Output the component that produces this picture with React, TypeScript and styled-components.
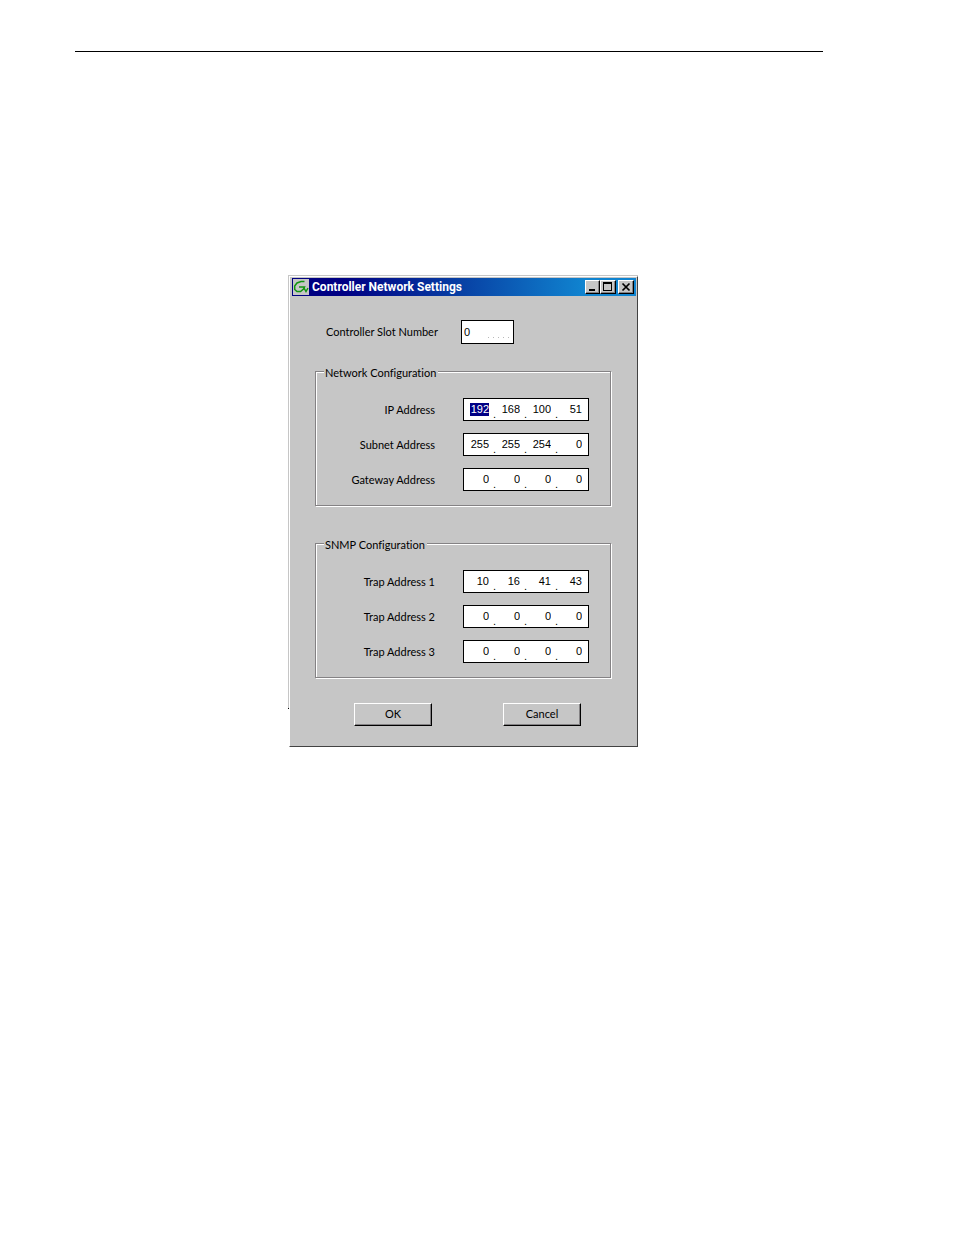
import React from 'react';
import styled, { createGlobalStyle, css } from 'styled-components';

const face = '#c6c6c6';
const digits = css`
  font-family: "Liberation Sans", Arial, sans-serif;
  font-size: 11px;
`;

const GlobalStyle = createGlobalStyle`
  *, *::before, *::after { box-sizing: border-box; }
  body {
    margin: 0;
    background: #fff;
    color: #000;
    font-family: Lato, "Liberation Sans", Arial, sans-serif;
    font-size: 11px;
    font-variant-ligatures: none;
    line-height: 16px;
  }
`;

const Page = styled.main`
  padding: 51px 131px 64px 75px;
`;

const Rule = styled.hr`
  height: 1px;
  margin: 0 0 223px;
  border: 0;
  background: #000;
`;

const Frame = styled.div`
  width: 350px;
  max-width: 100%;
  margin: 0 auto;
  position: relative;
  left: 14px;
  padding: 1px 0 0 1px;
  background:
    linear-gradient(#000, #000) 0 433px / 1px 1px no-repeat,
    linear-gradient(${face}, ${face}) 0 0 / 1px 433px no-repeat,
    linear-gradient(${face}, ${face}) 0 0 / 100% 1px no-repeat;
`;

const Dialog = styled.section`
  border: 1px solid #fff;
  border-right-color: #424242;
  border-bottom-color: #424242;
  background: ${face};
`;

const TitleBar = styled.header`
  display: flex;
  align-items: center;
  height: 18px;
  margin: 1px 1px 0 2px;
  padding: 0 2px 0 1px;
  background: linear-gradient(90deg, #000080, #000084 15%, #0842a5 50%, #1084d0 85%, #1084d0);
`;

const AppIcon = styled.svg`
  flex: none;
  width: 16px;
  height: 16px;
  margin-right: 3px;
`;

const Title = styled.h1`
  flex: 1;
  margin: 0;
  color: #fff;
  font-family: Roboto, "Liberation Sans", Arial, sans-serif;
  font-size: 12px;
  font-weight: bold;
  line-height: 16px;
  white-space: nowrap;
`;

const raised = css`
  border: 1px solid;
  border-color: #fff #000 #000 #fff;
  background: ${face};
  box-shadow: inset -1px -1px 0 #848284;
  color: #000;
`;

const WindowButton = styled.button<{ $apart?: boolean }>`
  ${raised}
  display: block;
  width: ${p => (p.$apart === undefined ? 15 : 16)}px;
  height: 14px;
  margin-left: ${p => (p.$apart ? 2 : 0)}px;
  padding: 0;
  svg { display: block; }
`;

const Form = styled.form`
  padding: 24px 25px 20px;
`;

const SlotRow = styled.div`
  display: flex;
  align-items: center;
  margin-bottom: 18px;
  padding-left: 11px;
`;

const SlotLabel = styled.label`
  width: 135px;
  white-space: nowrap;
`;

const SlotInput = styled.input`
  width: 53px;
  height: 24px;
  padding: 0 2px;
  border: 1px solid #000;
  border-radius: 0;
  outline: 0;
  background: repeating-linear-gradient(90deg, #b8b8b8 0 1px, #fff 1px 5px) 26px 16px / 21px 1px no-repeat #fff;
  ${digits}
`;

const Group = styled.fieldset`
  min-width: 0;
  margin: 0 1px 0 0;
  padding: 18px 0 14px 1px;
  border: 1px solid #848284;
  box-shadow: inset 1px 1px 0 #fff, 1px 1px 0 #fff;
  & + & { margin-top: 28px; }
`;

const Legend = styled.legend`
  margin-left: 7px;
  padding: 4px 2px 0 1px;
  background: ${face};
  line-height: 14px;
`;

const Rows = styled.div`
  display: grid;
  gap: 12px;
`;

const Row = styled.div`
  display: grid;
  grid-template-columns: 118px 126px;
  column-gap: 28px;
  align-items: center;
`;

const RowLabel = styled.label`
  text-align: right;
  white-space: nowrap;
`;

const AddressBox = styled.div`
  display: grid;
  grid-template-columns: repeat(4, 1fr);
  height: 23px;
  border: 1px solid #000;
  background: #fff;
`;

const Cell = styled.div`
  display: flex;
  align-items: center;
  justify-content: flex-end;
  min-width: 0;
`;

const Octet = styled.input<{ $selected: boolean }>`
  width: 19px;
  height: 13px;
  padding: 0;
  border: 0;
  border-radius: 0;
  outline: 0;
  background: ${p => (p.$selected ? '#000084' : 'transparent')};
  color: ${p => (p.$selected ? '#fff' : '#000')};
  ${digits}
  line-height: 13px;
  text-align: right;
`;

const Dot = styled.span`
  align-self: flex-end;
  width: 6px;
  padding-left: 4px;
  ${digits}
  line-height: 12px;
`;

const Actions = styled.div`
  display: flex;
  gap: 71px;
  margin-top: 25px;
  padding-left: 39px;
`;

const PushButton = styled.button`
  ${raised}
  width: 78px;
  height: 23px;
  padding: 0 0 2px;
  font: inherit;
`;

type AddressProps = { id: string; label: string; octets: string[]; selected?: number };

const AddressRow = ({ id, label, octets, selected }: AddressProps) => (
  <Row>
    <RowLabel htmlFor={`${id}-0`}>{label}</RowLabel>
    <AddressBox role="group" aria-label={label}>
      {octets.map((value, i) => (
        <Cell key={i}>
          <Octet
            id={`${id}-${i}`}
            aria-label={`${label}, part ${i + 1}`}
            defaultValue={value}
            maxLength={3}
            $selected={selected === i}
          />
          <Dot>{i < 3 ? '.' : ''}</Dot>
        </Cell>
      ))}
    </AddressBox>
  </Row>
);

export default function App() {
  return (
    <>
      <GlobalStyle />
      <Page>
        <Rule />
        <Frame>
          <Dialog>
            <TitleBar>
              <AppIcon viewBox="0 0 16 16" aria-hidden="true">
                <rect width="16" height="16" fill={face} />
                <path
                  d="M11.5 2.5H8L4 4L1.7 7V10.5L4 12.5H7.5L10.5 10L11.5 8H6M11 9L13 12.5L15 9"
                  fill="none"
                  stroke="#109410"
                  strokeWidth="1.5"
                />
              </AppIcon>
              <Title>Controller Network Settings</Title>
              <WindowButton type="button" aria-label="Minimize">
                <svg width="13" height="12" aria-hidden="true">
                  <path d="M3 8h6v2H3z" />
                </svg>
              </WindowButton>
              <WindowButton type="button" aria-label="Maximize" $apart={false}>
                <svg width="14" height="12" aria-hidden="true">
                  <path d="M2 1h9v9H2zM3 3v6h7V3z" fillRule="evenodd" />
                </svg>
              </WindowButton>
              <WindowButton type="button" aria-label="Close" $apart>
                <svg width="14" height="12" aria-hidden="true">
                  <path d="M3.5 2.5l7 7M10.5 2.5l-7 7" stroke="#000" strokeWidth="1.7" />
                </svg>
              </WindowButton>
            </TitleBar>
            <Form onSubmit={e => e.preventDefault()}>
              <SlotRow>
                <SlotLabel htmlFor="slot">Controller Slot Number</SlotLabel>
                <SlotInput id="slot" defaultValue="0" />
              </SlotRow>
              <Group>
                <Legend>Network Configuration</Legend>
                <Rows>
                  <AddressRow id="ip" label="IP Address" octets={['192', '168', '100', '51']} selected={0} />
                  <AddressRow id="subnet" label="Subnet Address" octets={['255', '255', '254', '0']} />
                  <AddressRow id="gateway" label="Gateway Address" octets={['0', '0', '0', '0']} />
                </Rows>
              </Group>
              <Group>
                <Legend>SNMP Configuration</Legend>
                <Rows>
                  <AddressRow id="trap1" label="Trap Address 1" octets={['10', '16', '41', '43']} />
                  <AddressRow id="trap2" label="Trap Address 2" octets={['0', '0', '0', '0']} />
                  <AddressRow id="trap3" label="Trap Address 3" octets={['0', '0', '0', '0']} />
                </Rows>
              </Group>
              <Actions>
                <PushButton type="submit">OK</PushButton>
                <PushButton type="button">Cancel</PushButton>
              </Actions>
            </Form>
          </Dialog>
        </Frame>
      </Page>
    </>
  );
}
